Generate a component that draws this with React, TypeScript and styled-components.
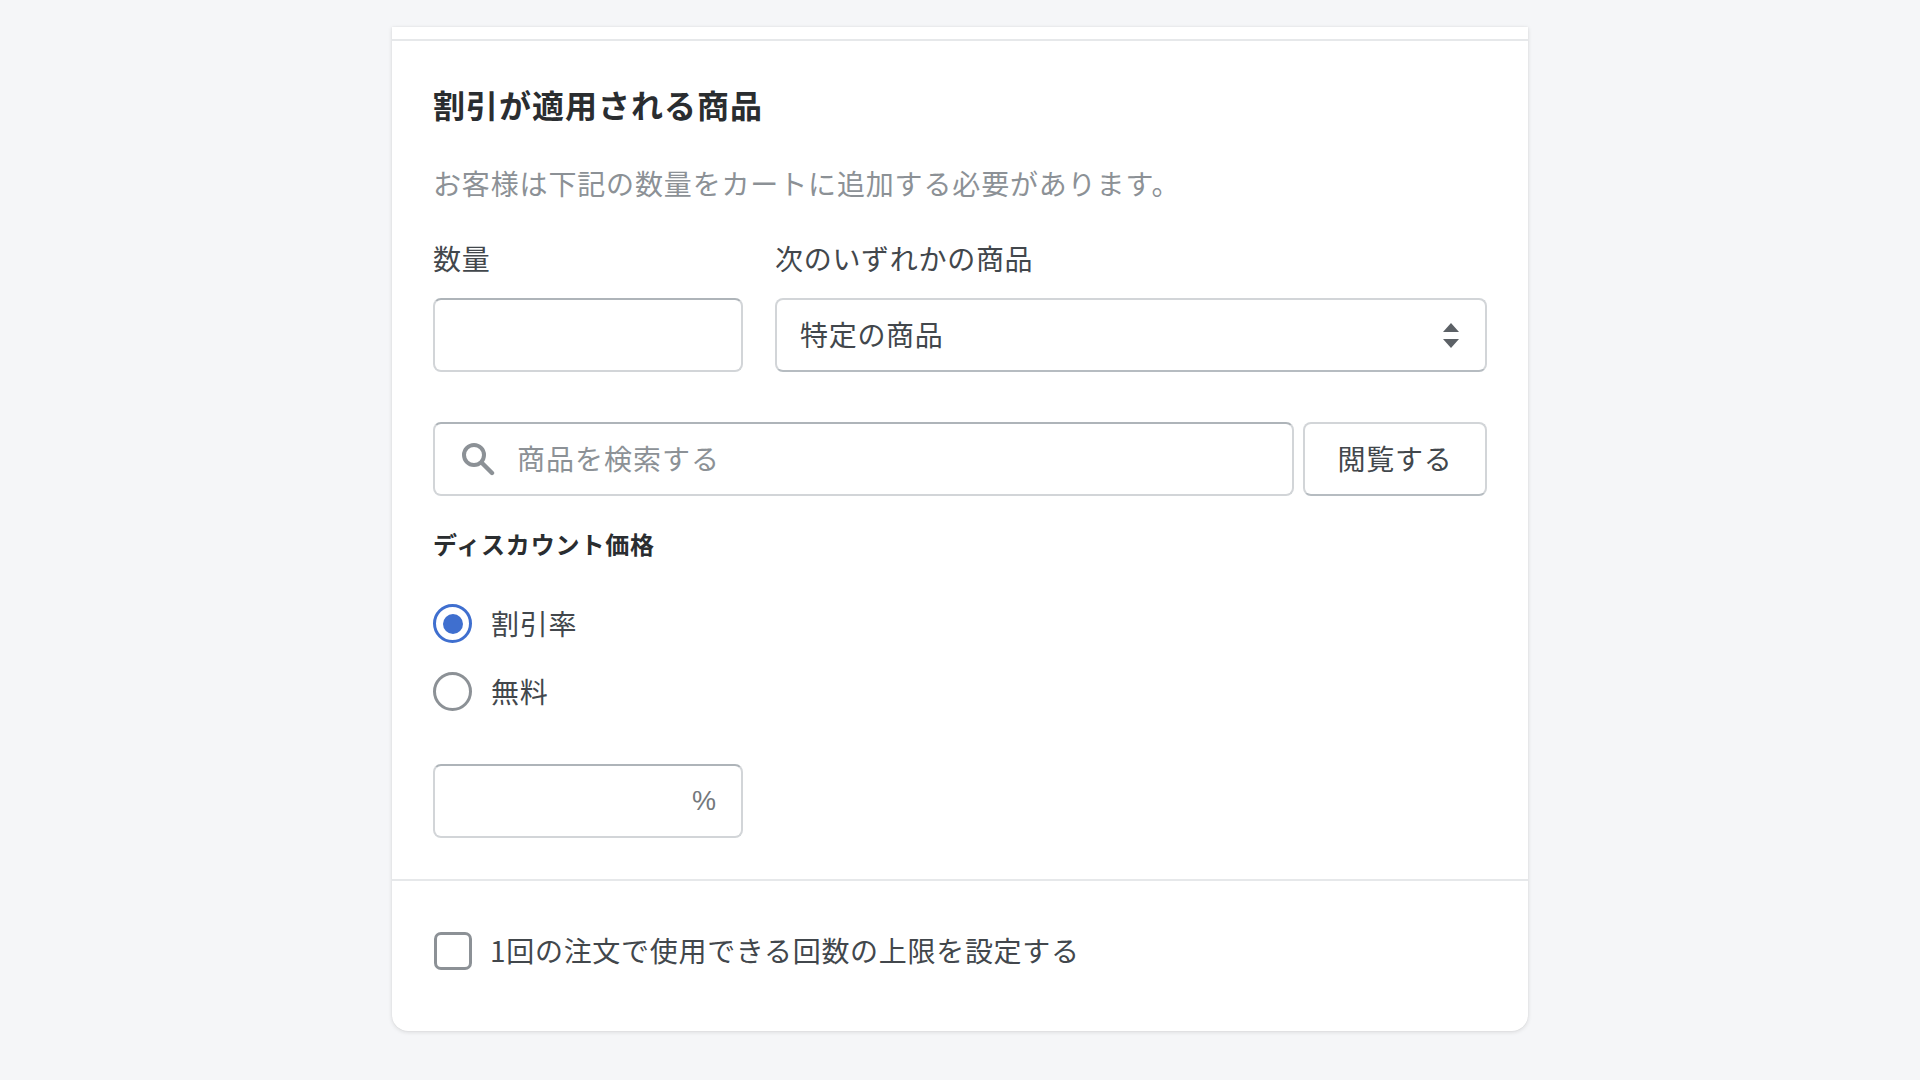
import React from "react";
import styled, { createGlobalStyle } from "styled-components";

const Global = createGlobalStyle`
  html, body { margin: 0; padding: 0; background: #f5f6f8; }
  body { font-family: "Noto Sans CJK JP", "Noto Sans", sans-serif; color: #42474c; }
  * { box-sizing: border-box; }
`;

const Page = styled.div`
  height: 1080px;
  overflow: hidden;
  background: #f5f6f8;
  display: flex;
  flex-direction: column;
  align-items: center;
  padding-top: 27px;
`;

const Card = styled.main`
  width: 1136px;
  background: #fff;
  border-radius: 0 0 16px 16px;
  box-shadow: 0 1px 4px rgba(23, 24, 24, 0.13), 0 0 1px rgba(23, 24, 24, 0.12);
`;

const TopStrip = styled.div`
  height: 14px;
  border-bottom: 2px solid #e6e8ea;
`;

const MainSection = styled.section`
  padding: 43px 41px 41px 41px;
  border-bottom: 2px solid #e6e8ea;
`;

const Title = styled.h2`
  margin: 0;
  font-size: 32px;
  line-height: 40px;
  font-weight: 700;
  letter-spacing: 1px;
  color: #2a2d30;
`;

const Description = styled.p`
  margin: 39px 0 0;
  font-size: 28px;
  line-height: 40px;
  letter-spacing: 0.85px;
  color: #8c9196;
`;

const FieldRow = styled.div`
  margin-top: 35px;
  display: grid;
  grid-template-columns: 310px 1fr;
  column-gap: 32px;
`;

const Field = styled.label`
  display: flex;
  flex-direction: column;
  gap: 20px;
  min-width: 0;
`;

const FieldLabel = styled.span`
  font-size: 28px;
  line-height: 40px;
  letter-spacing: 0.7px;
  color: #42474c;
`;

const TextInput = styled.input`
  width: 100%;
  height: 74px;
  padding: 0 24px;
  background: #fff;
  border: 2px solid #d2d5d8;
  border-top-color: #aeb4b9;
  border-radius: 8px;
  font: inherit;
  font-size: 28px;
  outline: none;
`;

const SelectBox = styled.div`
  position: relative;
  height: 74px;
`;

const NativeSelect = styled.select`
  width: 100%;
  height: 100%;
  padding: 0 60px 2px 23px;
  appearance: none;
  background: #fff;
  border: 2px solid #d2d5d8;
  border-bottom-color: #b6bcc1;
  border-radius: 8px;
  font: inherit;
  font-size: 28px;
  letter-spacing: 0.7px;
  color: #42474c;
  outline: none;
`;

const SelectIcon = styled.svg`
  position: absolute;
  top: 25px;
  right: 28px;
  width: 16px;
  height: 25px;
  pointer-events: none;
`;

const SearchRow = styled.div`
  margin-top: 50px;
  display: flex;
  gap: 9px;
`;

const SearchBox = styled.div`
  flex: 1;
  height: 74px;
  display: flex;
  align-items: center;
  gap: 22px;
  padding-left: 26px;
  background: #fff;
  border: 2px solid #d2d5d8;
  border-top-color: #aeb4b9;
  border-radius: 8px;
`;

const SearchIcon = styled.svg`
  flex: none;
  width: 34px;
  height: 34px;
`;

const SearchInput = styled.input`
  flex: 1;
  min-width: 0;
  border: 0;
  padding: 0 0 2px;
  outline: none;
  background: transparent;
  font: inherit;
  font-size: 28px;
  letter-spacing: 1px;
  color: #42474c;
  &::placeholder { color: #8c9196; opacity: 1; }
`;

const Button = styled.button`
  width: 184px;
  height: 74px;
  padding: 0 0 2px;
  background: #fff;
  border: 2px solid #d2d5d8;
  border-bottom-color: #b6bcc1;
  border-radius: 8px;
  font: inherit;
  font-size: 28px;
  letter-spacing: 0.7px;
  color: #42474c;
`;

const SubHeading = styled.h3`
  margin: 32px 0 0;
  font-size: 24px;
  line-height: 32px;
  font-weight: 700;
  letter-spacing: 0.85px;
  color: #2a2d30;
`;

const RadioGroup = styled.div`
  margin-top: 44px;
  display: flex;
  flex-direction: column;
  gap: 29px;
`;

const OptionRow = styled.label`
  display: flex;
  align-items: center;
  gap: 15px;
  height: 39px;
  font-size: 28px;
  letter-spacing: 0.7px;
  color: #42474c;
`;

const OptionText = styled.span`
  margin-left: 4px;
  padding-bottom: 2px;
`;

const Radio = styled.span<{ $checked?: boolean }>`
  flex: none;
  width: 39px;
  height: 39px;
  display: flex;
  align-items: center;
  justify-content: center;
  border-radius: 50%;
  border: 3px solid ${(p) => (p.$checked ? "#3f6fcf" : "#8c9196")};
  background: #fff;
  &::after {
    content: "";
    width: 20px;
    height: 20px;
    border-radius: 50%;
    background: ${(p) => (p.$checked ? "#3f6fcf" : "transparent")};
  }
`;

const PercentBox = styled.div`
  margin-top: 53px;
  width: 310px;
  height: 74px;
  display: flex;
  align-items: center;
  padding-right: 25px;
  background: #fff;
  border: 2px solid #d2d5d8;
  border-top-color: #aeb4b9;
  border-radius: 8px;
`;

const PercentInput = styled.input`
  flex: 1;
  min-width: 0;
  border: 0;
  outline: none;
  padding: 0 24px;
  background: transparent;
  font: inherit;
  font-size: 28px;
`;

const PercentSign = styled.span`
  font-family: "Liberation Sans", sans-serif;
  font-size: 27px;
  color: #74787c;
`;

const FooterSection = styled.section`
  padding: 50px 42px 61px 42px;
`;

const Checkbox = styled.span`
  flex: none;
  width: 38px;
  height: 38px;
  margin-right: -1px;
  border: 3px solid #8c9196;
  border-radius: 7px;
  background: #fff;
`;

export default function App() {
  return (
    <>
      <Global />
      <Page>
        <Card>
          <TopStrip />
          <MainSection>
            <Title>割引が適用される商品</Title>
            <Description>お客様は下記の数量をカートに追加する必要があります。</Description>
            <FieldRow>
              <Field>
                <FieldLabel>数量</FieldLabel>
                <TextInput type="text" />
              </Field>
              <Field>
                <FieldLabel>次のいずれかの商品</FieldLabel>
                <SelectBox>
                  <NativeSelect defaultValue="specific">
                    <option value="specific">特定の商品</option>
                  </NativeSelect>
                  <SelectIcon viewBox="0 0 16 25">
                    <path d="M8 0L16 9H0Z M0 16H16L8 25Z" fill="#5c6166" />
                  </SelectIcon>
                </SelectBox>
              </Field>
            </FieldRow>
            <SearchRow>
              <SearchBox>
                <SearchIcon viewBox="0 0 34 34">
                  <circle cx="13" cy="13" r="10" fill="none" stroke="#8c9196" strokeWidth="4" />
                  <path d="M20.5 20.5L31 31" stroke="#8c9196" strokeWidth="4.4" strokeLinecap="round" />
                </SearchIcon>
                <SearchInput placeholder="商品を検索する" />
              </SearchBox>
              <Button>閲覧する</Button>
            </SearchRow>
            <SubHeading>ディスカウント価格</SubHeading>
            <RadioGroup>
              <OptionRow><Radio $checked /><OptionText>割引率</OptionText></OptionRow>
              <OptionRow><Radio /><OptionText>無料</OptionText></OptionRow>
            </RadioGroup>
            <PercentBox>
              <PercentInput type="text" />
              <PercentSign>%</PercentSign>
            </PercentBox>
          </MainSection>
          <FooterSection>
            <OptionRow><Checkbox /><OptionText>1回の注文で使用できる回数の上限を設定する</OptionText></OptionRow>
          </FooterSection>
        </Card>
      </Page>
    </>
  );
}
